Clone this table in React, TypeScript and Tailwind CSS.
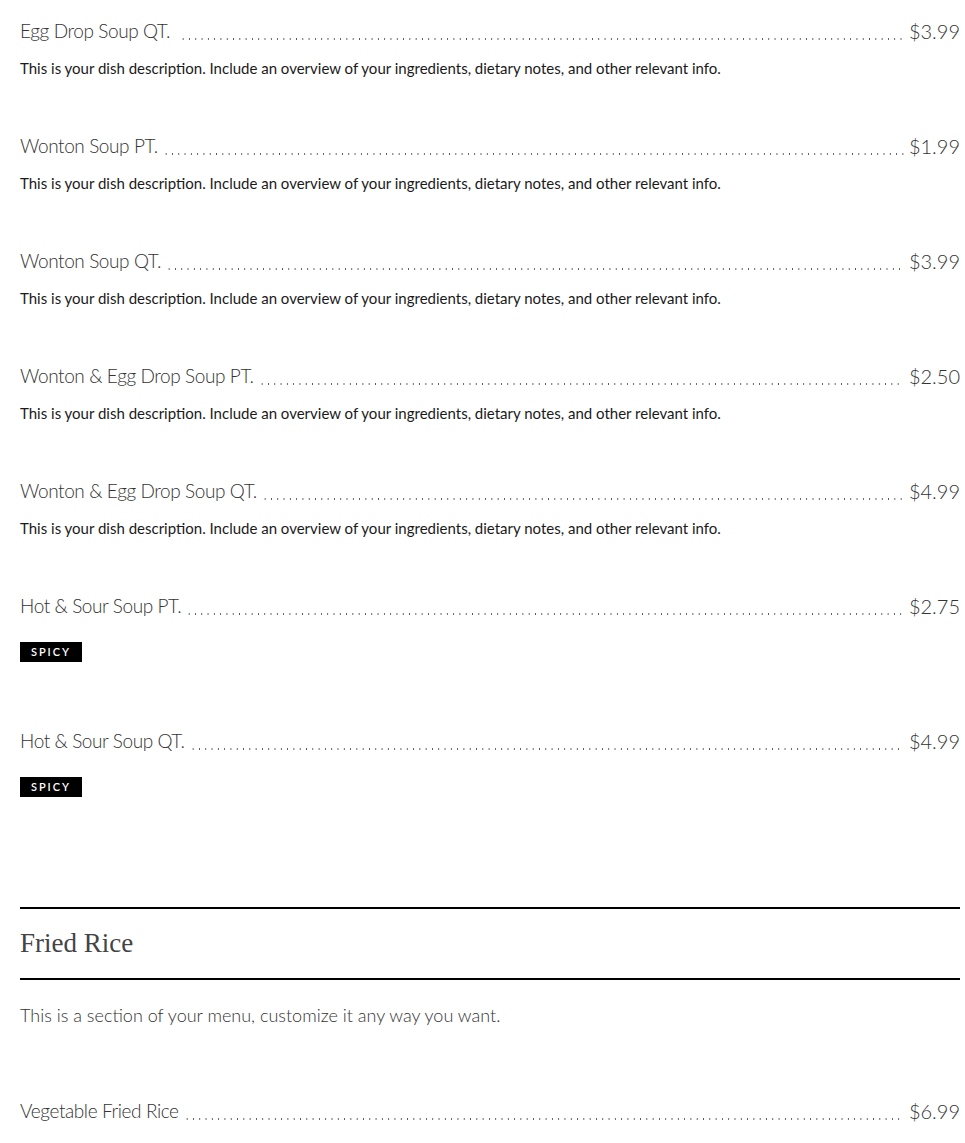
const items = [
  { name: "Egg Drop Soup QT. ", price: "$3.99", desc: true },
  { name: "Wonton Soup PT.", price: "$1.99", desc: true },
  { name: "Wonton Soup QT.", price: "$3.99", desc: true },
  { name: "Wonton & Egg Drop Soup PT.", price: "$2.50", desc: true },
  { name: "Wonton & Egg Drop Soup QT.", price: "$4.99", desc: true },
  { name: "Hot & Sour Soup PT.", price: "$2.75", desc: false },
  { name: "Hot & Sour Soup QT.", price: "$4.99", desc: false },
];

const DESC =
  "This is your dish description. Include an overview of your ingredients, dietary notes, and other relevant info.";

function ItemRow({ name, price }: { name: string; price: string }) {
  return (
    <div className="flex h-[30px] items-center font-light leading-[30px] text-[#333]">
      <span className="whitespace-pre text-[19px] tracking-[-0.4px]">{name}</span>
      <span
        className="mx-[5px] mt-[15px] h-[2px] flex-1 bg-[radial-gradient(circle,#555_0.7px,transparent_1px)] bg-[length:6.3px_2px] bg-repeat-x"
        aria-hidden
      />
      <span className="text-[20px]">{price}</span>
    </div>
  );
}

export default function App() {
  return (
    <div className="min-h-screen bg-white pl-[20px] pr-[5px] pt-[16px] font-['Lato','Liberation_Sans',sans-serif]">
      {items.map((it) =>
        it.desc ? (
          <div key={it.name} className="mb-[53px]">
            <ItemRow name={it.name} price={it.price} />
            <p className="mt-[12px] text-[15px] leading-[20px] text-[#1a1a1a]">{DESC}</p>
          </div>
        ) : (
          <div key={it.name} className="mb-[64px]">
            <ItemRow name={it.name} price={it.price} />
            <span className="mt-[21px] flex h-[20px] w-[62px] items-center justify-center bg-black text-[11px] font-semibold tracking-[2px] text-white">
              SPICY
            </span>
          </div>
        )
      )}

      <section className="mt-[110px]">
        <div className="border-t-2 border-black" />
        <h2 className="flex h-[69px] items-center font-['Liberation_Serif',serif] text-[27px] text-[#444]">
          Fried Rice
        </h2>
        <div className="border-t-2 border-black" />
        <p className="mt-[22px] text-[18px] font-light leading-[26px] text-[#333]">
          This is a section of your menu, customize it any way you want.
        </p>
      </section>

      <div className="mt-[68px]">
        <ItemRow name="Vegetable Fried Rice" price="$6.99" />
        <p className="mt-[12px] text-[15px] leading-[20px] text-[#1a1a1a]">{DESC}</p>
      </div>
    </div>
  );
}
